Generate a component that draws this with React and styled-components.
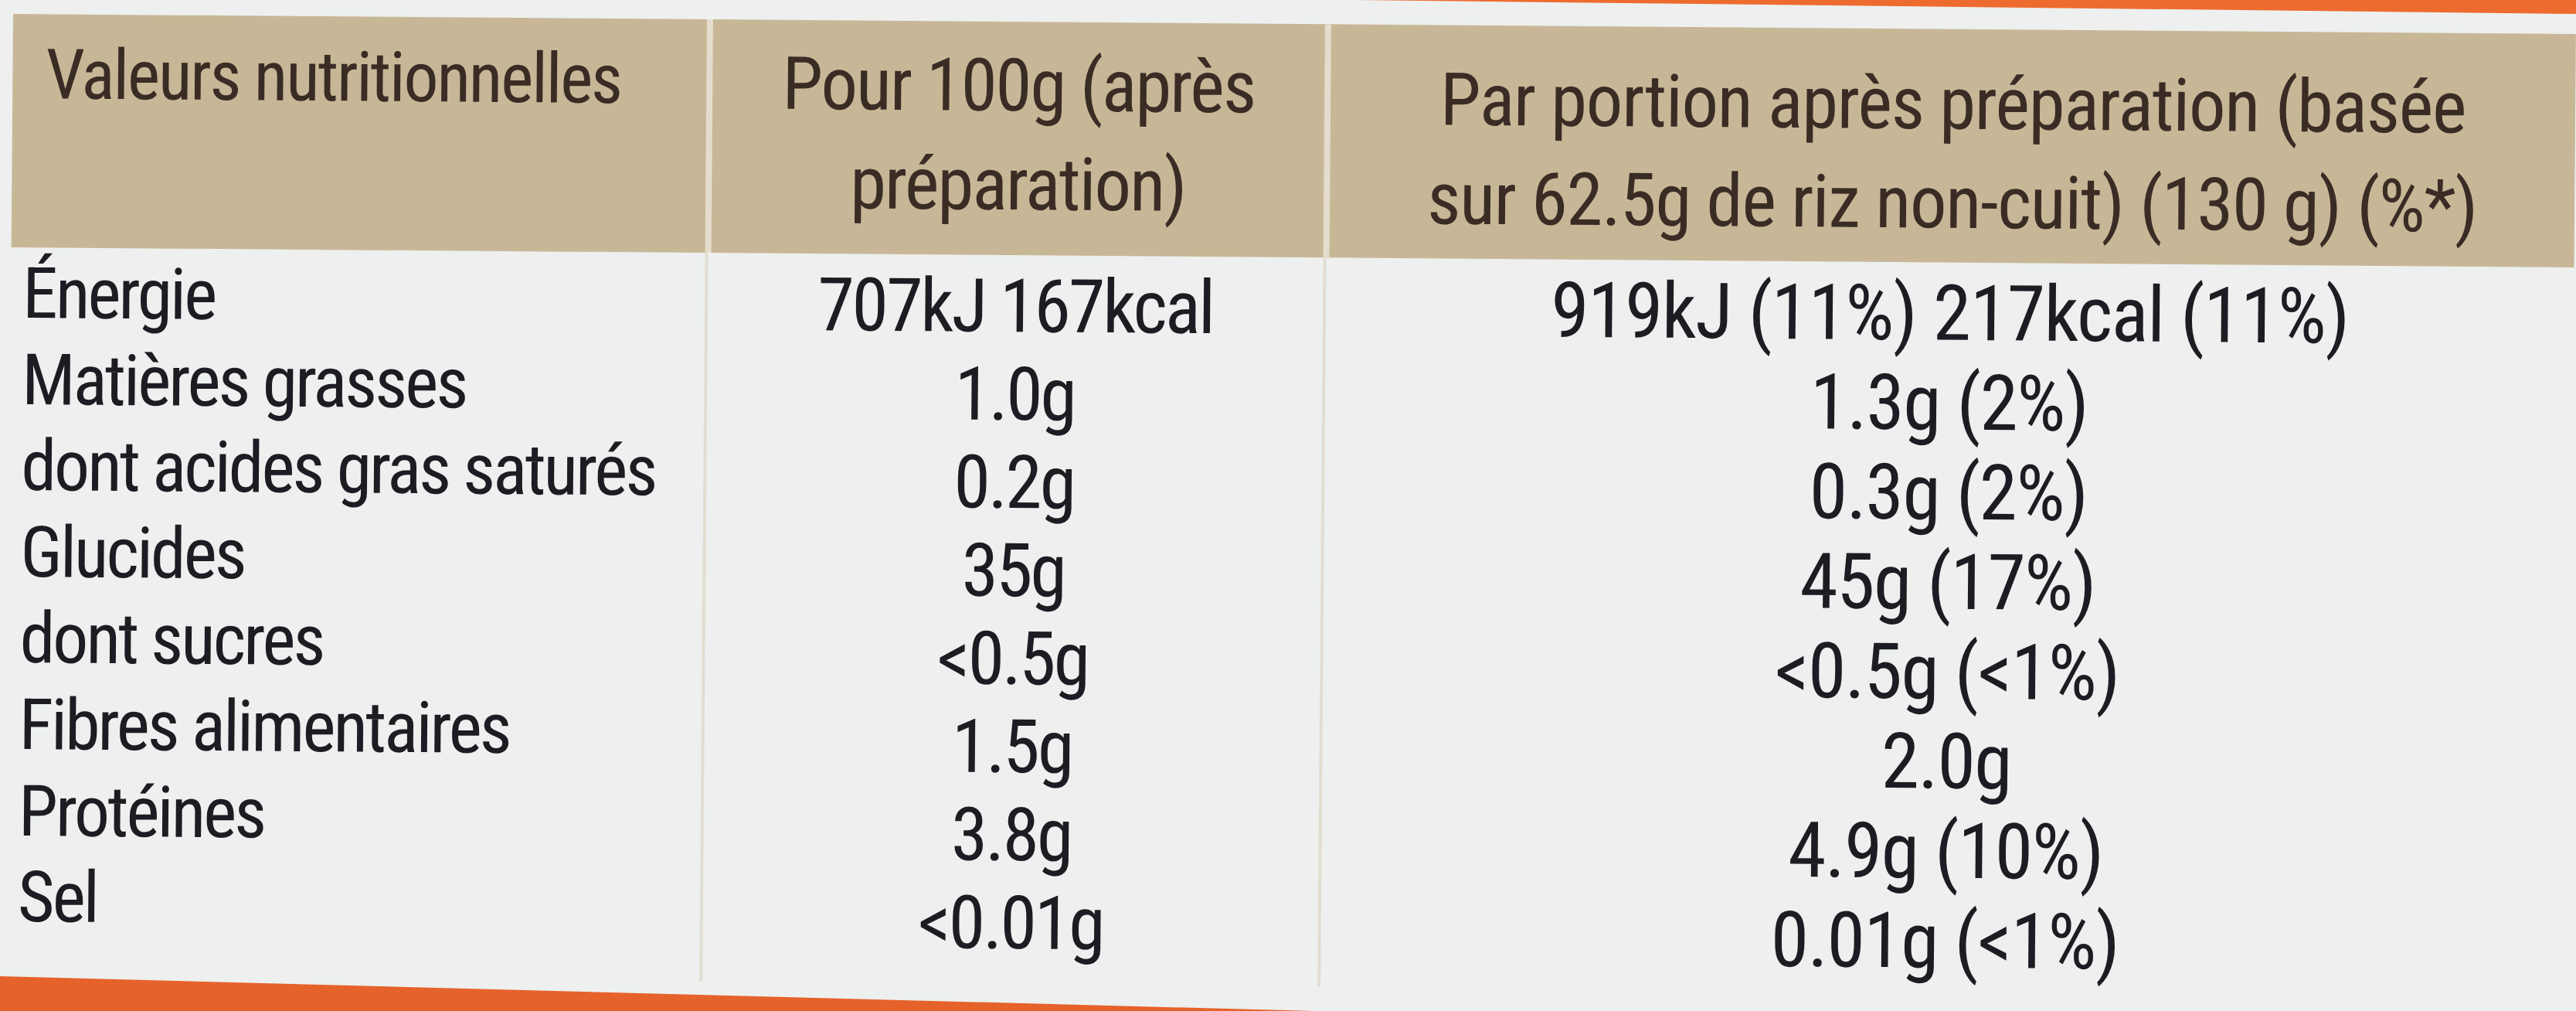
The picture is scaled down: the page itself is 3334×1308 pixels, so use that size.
import React from "react";
import styled, { createGlobalStyle } from "styled-components";

const GlobalStyle = createGlobalStyle`
  html, body {
    margin: 0;
    padding: 0;
    background: #edf0ef;
  }
`;

const Page = styled.div`
  width: 3334px;
  height: 1308px;
  overflow: hidden;
  display: flex;
  flex-direction: column;
  background: #edf0ef;
  font-family: Roboto, "Liberation Sans", Arial, sans-serif;
  font-stretch: 75%;
`;

const TopEdge = styled.div`
  flex: none;
  height: 18px;
  background: #ee6b2f;
  clip-path: polygon(1750px 0, 100% 0, 100% 100%);
`;

const BottomEdge = styled.div`
  flex: none;
  height: 45px;
  background: #e6622b;
  clip-path: polygon(0 0, 1700px 100%, 0 100%);
`;

const Table = styled.div`
  flex: 1;
  min-height: 0;
  margin-left: 17px;
  display: flex;
  flex-direction: column;
  transform: rotate(0.45deg);
  transform-origin: 0 0;
`;

const Head = styled.div`
  display: grid;
  grid-template-columns: 898px 800px 1fr;
  height: 302px;
  background: #c8b797;
  color: #3a2c25;
`;

const HeadCell = styled.div`
  padding-top: ${(p) => p.$top}px;
  padding-left: ${(p) => p.$left || 0}px;
  text-align: ${(p) => p.$align};
  font-size: ${(p) => p.$size}px;
  letter-spacing: ${(p) => p.$track}px;
  line-height: 128px;
  white-space: nowrap;
  border-left: ${(p) => (p.$first ? "none" : "8px solid #e4ddcd")};
`;

const Body = styled.div`
  display: grid;
  grid-template-columns: 898px 800px 1fr;
  flex: 1;
  color: #1c1c22;
`;

const Column = styled.div`
  display: flex;
  flex-direction: column;
  padding-top: ${(p) => p.$top}px;
  padding-left: ${(p) => p.$left || 0}px;
  text-align: ${(p) => p.$align};
  font-size: ${(p) => p.$size}px;
  letter-spacing: ${(p) => p.$track}px;
  line-height: ${(p) => p.$pitch}px;
  border-left: ${(p) => (p.$first ? "none" : "4px solid #e2ddd1")};
  white-space: nowrap;
`;

const rows = [
  ["Énergie", "707kJ 167kcal", "919kJ (11%) 217kcal (11%)"],
  ["Matières grasses", "1.0g", "1.3g (2%)"],
  ["dont acides gras saturés", "0.2g", "0.3g (2%)"],
  ["Glucides", "35g", "45g (17%)"],
  ["dont sucres", "<0.5g", "<0.5g (<1%)"],
  ["Fibres alimentaires", "1.5g", "2.0g"],
  ["Protéines", "3.8g", "4.9g (10%)"],
  ["Sel", "<0.01g", "0.01g (<1%)"],
];

export default function App() {
  return (
    <Page>
      <GlobalStyle />
      <TopEdge />
      <Table>
        <Head>
          <HeadCell $first $top={15} $left={43} $align="left" $size={90} $track={-2.2}>
            Valeurs nutritionnelles
          </HeadCell>
          <HeadCell $top={19} $align="center" $size={95} $track={-2}>
            Pour 100g (après
            <br />
            préparation)
          </HeadCell>
          <HeadCell $top={33} $align="center" $size={95} $track={-1.3}>
            Par portion après préparation (basée
            <br />
            sur 62.5g de riz non-cuit) (130 g) (%*)
          </HeadCell>
        </Head>
        <Body>
          <Column $first $top={4} $left={15} $align="left" $size={92} $track={-3} $pitch={111.6}>
            {rows.map((r) => (
              <span key={r[0]}>{r[0]}</span>
            ))}
          </Column>
          <Column $top={9} $align="center" $size={96} $track={-3} $pitch={114}>
            {rows.map((r) => (
              <span key={r[0]}>{r[1]}</span>
            ))}
          </Column>
          <Column $top={8} $align="center" $size={100} $track={-1.5} $pitch={116}>
            {rows.map((r) => (
              <span key={r[0]}>{r[2]}</span>
            ))}
          </Column>
        </Body>
      </Table>
      <BottomEdge />
    </Page>
  );
}
